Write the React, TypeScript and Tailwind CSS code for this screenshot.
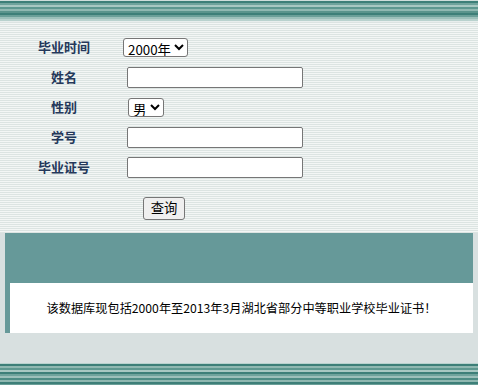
const cjk = { fontFamily: '"Noto Sans CJK SC", "Liberation Sans", sans-serif' }

function Band() {
  return (
    <div className="h-[22px] w-full bg-[linear-gradient(#cfdedb_0_1px,#3d7f78_1px_3px,#6fa39c_3px_5px,#a8c8c2_5px_7px,#5e9890_7px_9px,#8fb8b1_9px_11px,#5a948c_11px_13px,#3d7f78_13px_15px,#6a9f98_15px_17px,#9cc0ba_17px_19px,#b9d2ce_19px_21px,#e8eeed_21px_22px)]" />
  )
}

function BottomBand() {
  return (
    <div className="h-[22px] w-full bg-[linear-gradient(#b9d2ce_0_1px,#3d7f78_1px_3px,#8fb8b1_3px_5px,#5e9890_5px_7px,#a8c8c2_7px_9px,#3d7f78_9px_11px,#6fa39c_11px_13px,#9cc0ba_13px_15px,#4d8c84_15px_17px,#8fb8b1_17px_19px,#3d7f78_19px_21px,#6a9f98_21px_22px)]" />
  )
}

const inputCls =
  'h-[21px] w-[176px] rounded-[2px] border border-[#767676] bg-white px-1 text-[13px]'

function Row({ label, children }: { label: string; children: React.ReactNode }) {
  return (
    <div className="flex h-[30px] items-center">
      <span className="w-[123px] shrink-0 pl-[5px] text-center text-[13px] font-bold text-[#24385a]">
        {label}
      </span>
      {children}
    </div>
  )
}

export default function App() {
  return (
    <div className="flex h-[385px] w-[478px] flex-col bg-[#d8e0e0]" style={cjk}>
      <Band />
      <div className="h-[211px] bg-[repeating-linear-gradient(#dce4e2_0_1px,#f3f6f5_1px_2px)] pt-[10px]">
        <Row label="毕业时间">
          <select className="h-[19px] rounded-[3px] border border-[#767676] bg-white text-[13.33px] leading-[15px] text-black">
            <option>2000年</option>
            <option>2001年</option>
          </select>
        </Row>
        <Row label="姓名">
          <input className={`${inputCls} ml-[4px]`} />
        </Row>
        <Row label="性别">
          <select className="ml-[5px] h-[19px] rounded-[3px] border border-[#767676] bg-white text-[13.33px] leading-[15px] text-black">
            <option>男</option>
            <option>女</option>
          </select>
        </Row>
        <Row label="学号">
          <input className={`${inputCls} ml-[4px]`} />
        </Row>
        <Row label="毕业证号">
          <input className={`${inputCls} ml-[4px]`} />
        </Row>
        <div className="mt-[12px] pl-[143px]">
          <button className="h-[23px] w-[42px] rounded-[3px] border border-[#767676] bg-[#efefef] text-[13.33px] text-black">
            查询
          </button>
        </div>
      </div>
      <div className="flex-1 px-[5px]">
        <div className="h-[50px] bg-[#669999]" />
        <div className="flex h-[50px] items-center justify-center border-l-[5px] border-[#669999] bg-white text-[12.2px] text-black">
          该数据库现包括2000年至2013年3月湖北省部分中等职业学校毕业证书！
        </div>
      </div>
      <BottomBand />
    </div>
  )
}
